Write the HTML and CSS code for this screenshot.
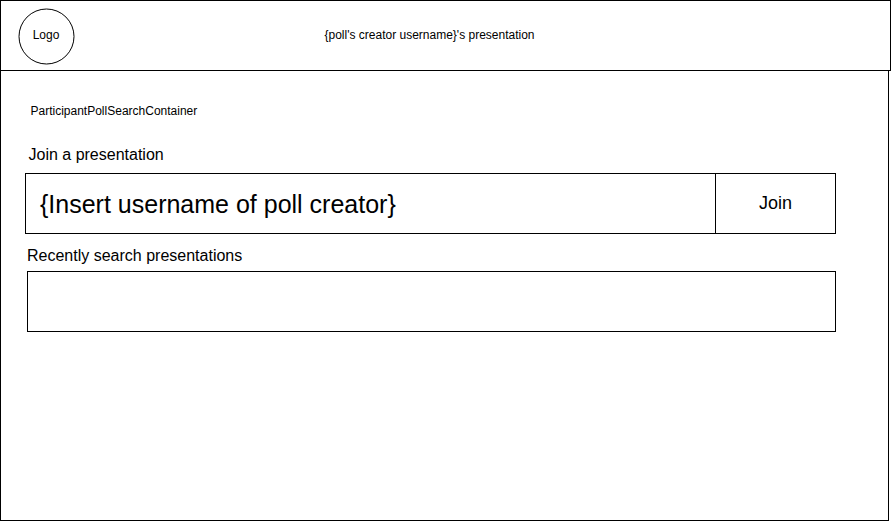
FILE: index.html
```html
<!DOCTYPE html>
<html lang="en">
<head>
<meta charset="utf-8">
<title>Join a presentation</title>
<link rel="stylesheet" href="styles.css">
</head>
<body>
<header class="topbar">
  <div class="logo"><svg class="ring" viewBox="0 0 57 57"><circle cx="28.5" cy="28.5" r="27.5"/></svg><span class="logo-text">Logo</span></div>
  <div class="title">{poll's creator username}'s presentation</div>
</header>
<main class="content">
  <div class="component">ParticipantPollSearchContainer</div>
  <h1 class="heading">Join a presentation</h1>
  <div class="search">
    <div class="field">{Insert username of poll creator}</div>
    <div class="join">Join</div>
  </div>
  <h2 class="heading recent-title">Recently search presentations</h2>
  <div class="recent"></div>
</main>
</body>
</html>
```

FILE: styles.css
```css
* { box-sizing: border-box; }
body {
  margin: 0;
  width: 891px;
  height: 521px;
  overflow: hidden;
  display: flex;
  flex-direction: column;
  background: #fff;
  color: #000;
  font-family: "Liberation Sans", Arial, sans-serif;
  font-size: 12px;
}
.topbar {
  display: flex;
  height: 71px;
  border: 1px solid #000;
}
.logo {
  display: grid;
  width: 57px;
  height: 57px;
  margin: 7px 0 0 17px;
}
.ring, .logo-text { grid-area: 1 / 1; }
.ring { width: 57px; height: 57px; fill: #fff; stroke: #000; }
.logo-text { padding: 20px 1px 0 0; line-height: 14px; text-align: center; }
.title { margin-left: 249.5px; padding-top: 27px; line-height: 14px; white-space: nowrap; }
.content {
  width: 889px;
  height: 450px;
  border: solid #000;
  border-width: 0 1px 1px;
  padding-left: 24px;
}
.component { padding: 33px 0 0 5.5px; line-height: 14px; }
.heading { margin: 0; font-size: 16px; font-weight: 400; line-height: 18px; padding-left: 3.5px; }
h1.heading { margin-top: 28px; }
.search { display: flex; width: 811px; height: 61px; margin-top: 9px; border: 1px solid #000; }
.field { width: 689px; padding: 16px 0 0 14px; font-size: 25px; line-height: 28px; }
.join { flex: 1; border-left: 1px solid #000; padding-top: 19px; font-size: 18px; line-height: 21px; text-align: center; }
.recent-title { margin-top: 13px; padding-left: 2px; }
.recent { width: 809px; height: 61px; margin: 6px 0 0 2px; border: 1px solid #000; }
```
